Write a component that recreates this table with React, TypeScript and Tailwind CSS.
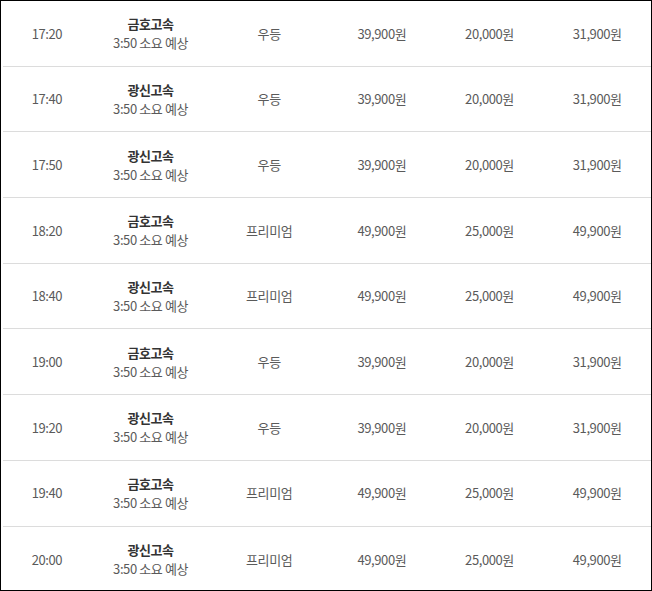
import React from 'react';

interface BusRow {
  time: string;
  company: string;
  grade: string;
  adult: string;
  child: string;
  student: string;
}

const rows: BusRow[] = [
  { time: '17:20', company: '금호고속', grade: '우등', adult: '39,900원', child: '20,000원', student: '31,900원' },
  { time: '17:40', company: '광신고속', grade: '우등', adult: '39,900원', child: '20,000원', student: '31,900원' },
  { time: '17:50', company: '광신고속', grade: '우등', adult: '39,900원', child: '20,000원', student: '31,900원' },
  { time: '18:20', company: '금호고속', grade: '프리미엄', adult: '49,900원', child: '25,000원', student: '49,900원' },
  { time: '18:40', company: '광신고속', grade: '프리미엄', adult: '49,900원', child: '25,000원', student: '49,900원' },
  { time: '19:00', company: '금호고속', grade: '우등', adult: '39,900원', child: '20,000원', student: '31,900원' },
  { time: '19:20', company: '광신고속', grade: '우등', adult: '39,900원', child: '20,000원', student: '31,900원' },
  { time: '19:40', company: '금호고속', grade: '프리미엄', adult: '49,900원', child: '25,000원', student: '49,900원' },
  { time: '20:00', company: '광신고속', grade: '프리미엄', adult: '49,900원', child: '25,000원', student: '49,900원' },
];

const App: React.FC = () => {
  return (
    <div
      className="w-[652px] h-[591px] overflow-hidden bg-white border border-black text-[13px] text-[#5a5a5a] tracking-[-0.4px]"
      style={{ fontFamily: '"Noto Sans CJK KR", "Noto Sans", sans-serif' }}
    >
      <div className="pl-[2px]">
        {rows.map((r, i) => (
          <div
            key={i}
            className={`flex items-center h-[65.7px] ${i < rows.length - 1 ? 'border-b border-[#dcdcdc]' : ''}`}
          >
            <div className="w-[88px] text-center">{r.time}</div>
            <div className="w-[120px] text-center leading-[19px]">
              <p className="font-bold text-[#333]">{r.company}</p>
              <p>3:50 소요 예상</p>
            </div>
            <div className="w-[118px] text-center">{r.grade}</div>
            <div className="w-[108px] text-center">{r.adult}</div>
            <div className="w-[108px] text-center">{r.child}</div>
            <div className="w-[108px] text-center">{r.student}</div>
          </div>
        ))}
      </div>
    </div>
  );
};

export default App;
